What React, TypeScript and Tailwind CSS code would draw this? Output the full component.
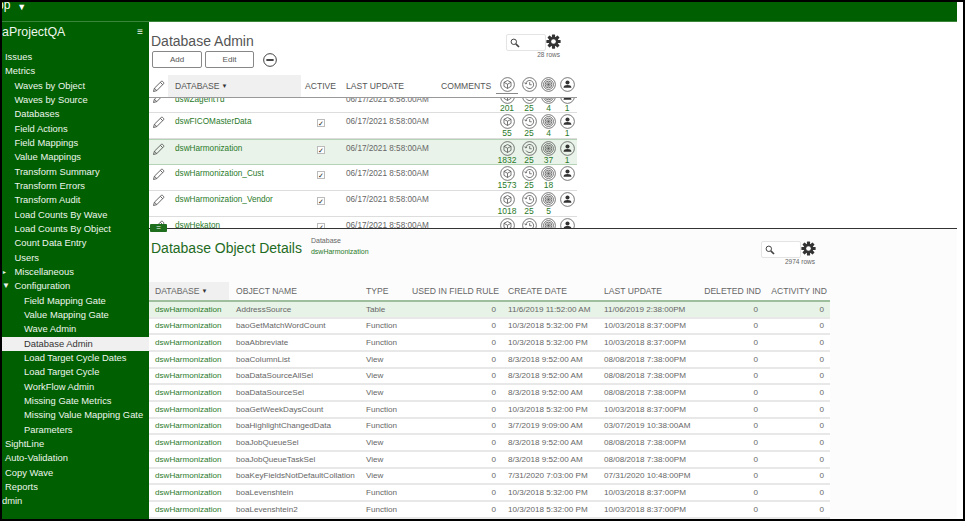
import React from "react";

const GREEN = "bg-[#005f00]";

const CircleIcon = ({ kind }: { kind: "cube" | "clock" | "target" | "user" }) => (
  <svg className="shrink-0" width="15" height="15" viewBox="0 0 17 17" fill="none" stroke="#555" strokeWidth="0.9">
    <circle cx="8.5" cy="8.5" r="7.8" />
    {kind === "cube" && (
      <>
        <path d="M8.5 4 L12.5 6 V10.6 L8.5 13 L4.5 10.6 V6 Z" />
        <path d="M4.5 6 L8.5 8.2 L12.5 6 M8.5 8.2 V13" />
      </>
    )}
    {kind === "clock" && (
      <>
        <path d="M4.2 7.2 A4.6 4.6 0 1 1 4.6 10.8" />
        <path d="M3 6.4 L4.2 8 L5.8 7" />
        <path d="M8.7 5.8 V8.8 H11" />
      </>
    )}
    {kind === "target" && (
      <>
        <circle cx="8.5" cy="8.5" r="5.6" />
        <circle cx="8.5" cy="8.5" r="3.8" />
        <circle cx="8.5" cy="8.5" r="2.1" />
        <circle cx="8.5" cy="8.5" r="0.8" fill="#555" />
      </>
    )}
    {kind === "user" && (
      <>
        <circle cx="8.5" cy="6.2" r="2.3" fill="#333" stroke="none" />
        <path d="M4 12.2 C4 9.8 6 9 8.5 9 C11 9 13 9.8 13 12.2 Z" fill="#333" stroke="none" />
      </>
    )}
  </svg>
);

const Pencil = () => (
  <svg className="shrink-0" width="13" height="13" viewBox="0 0 13 13" fill="none" stroke="#555" strokeWidth="0.9">
    <path d="M1.5 11.5 L2.4 8.2 L9.3 1.4 Q10 0.9 10.7 1.5 L11.6 2.4 Q12.1 3.1 11.6 3.7 L4.8 10.6 Z" />
    <path d="M2.4 8.2 L4.8 10.6 M8.4 2.4 L10.7 4.7" />
  </svg>
);

const Gear = () => (
  <svg width="15" height="15" viewBox="0 0 16 16">
    <g fill="#333">
      {[0, 45, 90, 135].map((a) => (
        <rect key={a} x="6.3" y="0.4" width="3.4" height="15.2" rx="0.6" transform={`rotate(${a} 8 8)`} />
      ))}
    </g>
    <circle cx="8" cy="8" r="5.2" fill="#333" />
    <circle cx="8" cy="8" r="2.5" fill="#fff" />
  </svg>
);

const Magnifier = () => (
  <svg width="10" height="10" viewBox="0 0 10 10" fill="none" stroke="#444">
    <circle cx="3.8" cy="3.8" r="2.7" strokeWidth="1" />
    <path d="M5.8 5.8 L9 9" strokeWidth="1.7" />
  </svg>
);

const Search = ({ rows }: { rows: string }) => (
  <div className="flex flex-col items-end">
    <div className="flex items-start">
      <div className="flex h-[17px] w-[40px] items-center rounded-[2px] border border-[#e4e4e4] bg-white pl-[3px]">
        <Magnifier />
      </div>
      <Gear />
    </div>
    <div className="-mt-[1px] mr-[1px] text-[6.5px] leading-[9px] text-[#666]">{rows}</div>
  </div>
);

const SortArrow = () => <span className="ml-[2px] text-[6px] text-[#333]">▼</span>;

type Nav = { t: string; x: string; sel?: boolean; arrow?: string; arrowCls?: string };
const nav: Nav[] = [
  { t: "Issues", x: "pl-[3px]" },
  { t: "Metrics", x: "pl-[3px]" },
  ...["Waves by Object", "Waves by Source", "Databases", "Field Actions", "Field Mappings", "Value Mappings", "Transform Summary", "Transform Errors", "Transform Audit", "Load Counts By Wave", "Load Counts By Object", "Count Data Entry", "Users"].map((t) => ({ t, x: "pl-[12.5px]" })),
  { t: "Miscellaneous", x: "pl-[12.5px]", arrow: "►", arrowCls: "text-[5px]" },
  { t: "Configuration", x: "pl-[12.5px]", arrow: "▼", arrowCls: "text-[8px]" },
  { t: "Field Mapping Gate", x: "pl-[22px]" },
  { t: "Value Mapping Gate", x: "pl-[22px]" },
  { t: "Wave Admin", x: "pl-[22px]" },
  { t: "Database Admin", x: "pl-[22px]", sel: true },
  ...["Load Target Cycle Dates", "Load Target Cycle", "WorkFlow Admin", "Missing Gate Metrics", "Missing Value Mapping Gate", "Parameters"].map((t) => ({ t, x: "pl-[22px]" })),
  ...["SightLine", "Auto-Validation", "Copy Wave", "Reports"].map((t) => ({ t, x: "pl-[3px]" })),
  { t: "dmin", x: "pl-0" },
];

const upper = [
  { n: "dswZagentTd", c: ["201", "25", "4", "1"], h: "h-[15px]", clip: true },
  { n: "dswFICOMasterData", c: ["55", "25", "4", "1"], h: "h-[26px]" },
  { n: "dswHarmonization", c: ["1832", "25", "37", "1"], h: "h-[26px]", sel: true },
  { n: "dswHarmonization_Cust", c: ["1573", "25", "18", ""], h: "h-[26px]" },
  { n: "dswHarmonization_Vendor", c: ["1018", "25", "5", ""], h: "h-[26px]" },
  { n: "dswHekaton", c: ["", "", "", ""], h: "h-[26px]" },
];

const kinds = ["cube", "clock", "target", "user"] as const;
const iconCols = ["w-[22px]", "w-[22px]", "w-[17px]", "w-[20px]"];

const lower = [
  ["AddressSource", "Table", "11/6/2019 11:52:00 AM", "11/06/2019 2:38:00PM"],
  ["baoGetMatchWordCount", "Function", "10/3/2018 5:32:00 PM", "10/03/2018 8:37:00PM"],
  ["boaAbbreviate", "Function", "10/3/2018 5:32:00 PM", "10/03/2018 8:37:00PM"],
  ["boaColumnList", "View", "8/3/2018 9:52:00 AM", "08/08/2018 7:38:00PM"],
  ["boaDataSourceAllSel", "View", "8/3/2018 9:52:00 AM", "08/08/2018 7:38:00PM"],
  ["boaDataSourceSel", "View", "8/3/2018 9:52:00 AM", "08/08/2018 7:38:00PM"],
  ["boaGetWeekDaysCount", "Function", "10/3/2018 5:32:00 PM", "10/03/2018 8:37:00PM"],
  ["boaHighlightChangedData", "Function", "3/7/2019 9:09:00 AM", "03/07/2019 10:38:00AM"],
  ["boaJobQueueSel", "View", "8/3/2018 9:52:00 AM", "08/08/2018 7:38:00PM"],
  ["boaJobQueueTaskSel", "View", "8/3/2018 9:52:00 AM", "08/08/2018 7:38:00PM"],
  ["boaKeyFieldsNotDefaultCollation", "View", "7/31/2020 7:03:00 PM", "07/31/2020 10:48:00PM"],
  ["boaLevenshtein", "Function", "10/3/2018 5:32:00 PM", "10/03/2018 8:37:00PM"],
  ["boaLevenshtein2", "Function", "10/3/2018 5:32:00 PM", "10/03/2018 8:37:00PM"],
];

const lowerCols = "grid grid-cols-[80px_137px_44px_89px_105px_99px_58px_69px] w-[681px]";

export default function App() {
  return (
    <div className="h-[521px] w-[965px] overflow-hidden border-2 border-black bg-white font-['Liberation_Sans',Arial,sans-serif]">
      <div className="flex h-full w-[955px] flex-col">
        <div className={`${GREEN} flex h-[20px] shrink-0 items-start overflow-hidden border-b border-[#3a853a] text-[12px] leading-[12px] text-white`}>
          <span className="-mt-[3px] -ml-[5px]">pp</span>
          <span className="ml-[7px] -mt-[1px] text-[9px]">▼</span>
        </div>
        <div className="flex min-h-0 flex-1">
          <nav className={`${GREEN} flex w-[147px] shrink-0 flex-col text-[9.4px] leading-[14.33px] text-[#eef6ee]`}>
            <div className="flex h-[28px] shrink-0 items-center justify-between pb-[7px] pr-[6px] text-[12.4px]">
              <span>aProjectQA</span>
              <span className="text-[10px]">≡</span>
            </div>
            {nav.map((n) => (
              <div
                key={n.t}
                className={`relative h-[14.33px] shrink-0 whitespace-nowrap ${n.x} ${n.sel ? "bg-[#f0f0f0] text-[#333]" : ""}`}
              >
                {n.arrow && <span className={`absolute left-0 top-0 ${n.arrowCls}`}>{n.arrow}</span>}
                {n.t}
              </div>
            ))}
          </nav>

          <main className="flex min-w-0 flex-1 flex-col">
            <section className="flex h-[206px] shrink-0 flex-col overflow-hidden">
              <div className="flex h-[53px] shrink-0 items-start justify-between pl-[2px]">
                <div className="flex flex-col">
                  <div className="mt-[9px] text-[14px] leading-[20px] text-[#555]">Database Admin</div>
                  <div className="ml-[1px] flex items-center gap-[3px]">
                    <button className="h-[17px] w-[50px] rounded-[2px] border border-[#888] bg-white text-[8px] text-[#555]">Add</button>
                    <button className="h-[17px] w-[49px] rounded-[2px] border border-[#888] bg-white text-[8px] text-[#555]">Edit</button>
                    <svg className="ml-[6px]" width="14" height="14" viewBox="0 0 15 15" fill="none">
                      <circle cx="7.5" cy="7.5" r="6.8" stroke="#333" />
                      <path d="M3.6 7.5 H11.4" stroke="#222" strokeWidth="1.8" />
                    </svg>
                  </div>
                </div>
                <div className="mr-[396px] mt-[12px]">
                  <Search rows="28 rows" />
                </div>
              </div>
              <div className="flex h-[23px] w-[428px] shrink-0 items-center border-b border-[#999] text-[8.6px] text-[#555]">
                <div className="flex w-[19px] shrink-0 justify-center"><Pencil /></div>
                <div className="flex h-full w-[133px] shrink-0 items-center bg-[#f0f0f0] pl-[7px]">DATABASE<SortArrow /></div>
                <div className="w-[40px] shrink-0 pl-[4px]">ACTIVE</div>
                <div className="w-[96px] shrink-0 pl-[5px]">LAST UPDATE</div>
                <div className="w-[59px] shrink-0 pl-[4px]">COMMENTS</div>
                <div className="flex h-full shrink-0 items-start pt-[2px]">
                  {kinds.map((k, i) => (
                    <div key={k} className={`flex justify-center ${iconCols[i]} ${i === 0 ? "border-b border-[#888] pb-[1px]" : ""}`}>
                      <CircleIcon kind={k} />
                    </div>
                  ))}
                </div>
              </div>
              <div className="min-h-0 flex-1 overflow-hidden">
                <div className="w-[428px]">
                  {upper.map((r) => (
                    <div
                      key={r.n}
                      className={`flex overflow-hidden ${r.h} ${r.sel ? "border-y border-[#b5d4b5] bg-[#e9f3e9]" : "border-b border-[#ddd]"} text-[8.2px] leading-[10px] text-[#666]`}
                    >
                      <div className={`flex w-[19px] shrink-0 justify-center pt-[3px] ${r.clip ? "-mt-[10px]" : ""}`}><Pencil /></div>
                      <div className={`w-[133px] shrink-0 pl-[7px] pt-[4px] text-[#2a7a2a] ${r.clip ? "-mt-[7px]" : ""}`}>{r.n}</div>
                      <div className="flex w-[40px] shrink-0 justify-center pt-[6px]">
                        {!r.clip && <div className="flex h-[8px] w-[8px] items-center justify-center border border-[#bbb] bg-white text-[7px] leading-[7px] text-[#222]">✓</div>}
                      </div>
                      <div className={`w-[96px] shrink-0 whitespace-nowrap pl-[5px] pt-[4px] ${r.clip ? "-mt-[7px]" : ""}`}>06/17/2021 8:58:00AM</div>
                      <div className="w-[59px] shrink-0" />
                      <div className={`flex shrink-0 pt-[1px] ${r.clip ? "-mt-[10px]" : ""}`}>
                        {kinds.map((k, i) => (
                          <div key={k} className={`flex flex-col items-center ${iconCols[i]}`}>
                            <CircleIcon kind={k} />
                            <span className="text-[8.5px] leading-[9px] text-[#2a7a2a]">{r.c[i]}</span>
                          </div>
                        ))}
                      </div>
                    </div>
                  ))}
                </div>
              </div>
            </section>

            <section className="relative flex min-h-0 flex-1 flex-col border-t border-[#333] bg-[#fcfcfc]">
              <div className="absolute left-[1px] top-[-5px] z-10 flex h-[8px] w-[17px] items-center justify-center rounded-[1px] bg-[#1e6e1e] text-[8px] leading-[8px] text-white">=</div>
              <div className="flex h-[53px] shrink-0 items-start justify-between pl-[2px]">
                <div className="flex items-start">
                  <div className="mt-[9px] text-[14px] leading-[20px] text-[#1f6b1f]">Database Object Details</div>
                  <div className="ml-[9px] mt-[6px] text-[7px] leading-[11px]">
                    <div className="text-[#666]">Database</div>
                    <div className="text-[#2a7a2a]">dswHarmonization</div>
                  </div>
                </div>
                <div className="mr-[141px] mt-[12px]">
                  <Search rows="2974 rows" />
                </div>
              </div>
              <div className={`${lowerCols} h-[20px] shrink-0 items-center whitespace-nowrap border-b-2 border-[#9dbf9d] text-[8.6px] text-[#666]`}>
                <div className="flex h-full items-center bg-[#f0f0f0] pl-[6px]">DATABASE<SortArrow /></div>
                <div className="pl-[7px]">OBJECT NAME</div>
                <div>TYPE</div>
                <div className="text-right">USED IN FIELD RULE</div>
                <div className="pl-[9px]">CREATE DATE</div>
                <div>LAST UPDATE</div>
                <div className="text-right">DELETED IND</div>
                <div className="pr-[3px] text-right">ACTIVITY IND</div>
              </div>
              <div className="min-h-0 flex-1 overflow-hidden">
                {lower.map((r, i) => (
                  <div
                    key={r[0]}
                    className={`${lowerCols} h-[16.67px] items-center border-b-2 border-[#e8e8e8] pt-[1px] text-[8.1px] text-[#666] ${i === 0 ? "bg-[#e6f3e6]" : "bg-white"}`}
                  >
                    <div className="pl-[6px] text-[#2a7a2a]">dswHarmonization</div>
                    <div className="whitespace-nowrap pl-[7px]">{r[0]}</div>
                    <div>{r[1]}</div>
                    <div className="pr-[3px] text-right">0</div>
                    <div className="whitespace-nowrap pl-[9px]">{r[2]}</div>
                    <div className="whitespace-nowrap">{r[3]}</div>
                    <div className="pr-[3px] text-right">0</div>
                    <div className="pr-[6px] text-right">0</div>
                  </div>
                ))}
              </div>
            </section>
          </main>
        </div>
      </div>
    </div>
  );
}
